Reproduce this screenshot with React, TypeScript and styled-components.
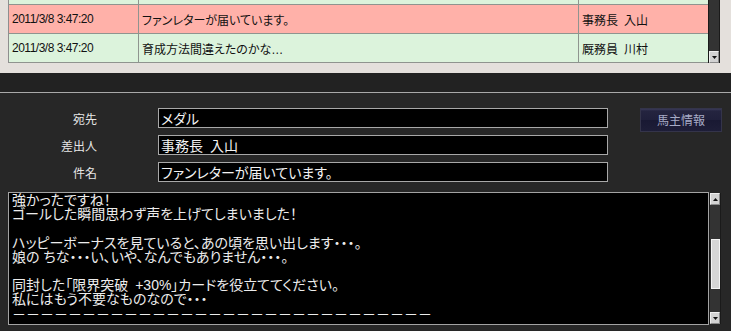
import React from "react";
import styled, { createGlobalStyle } from "styled-components";

const GlobalStyle = createGlobalStyle`
  html, body { margin: 0; padding: 0; background: #ffffff; }
  body { font-family: "Noto Sans CJK JP", sans-serif; }
  #root { width: 737px; }
`;

const JP = `"Liberation Sans", "Noto Sans CJK JP", sans-serif`;

const Screen = styled.div`
  width: 731px;
  height: 331px;
  display: flex;
  flex-direction: column;
  overflow: hidden;
`;

/* ---------- letter list (top) ---------- */
const ListArea = styled.div`
  height: 73px;
  box-sizing: border-box;
  background: #e4e0dc;
  padding-left: 8px;
  display: flex;
  align-items: flex-start;
`;

const ListView = styled.div`
  width: 700px;
  height: 63px;
  box-sizing: border-box;
  border-left: 1px solid #8e8e8e;
  overflow: hidden;
`;

const Rows = styled.div<{ $scroll: number }>`
  display: flex;
  flex-direction: column;
  margin-top: ${(p) => -p.$scroll}px;
`;

const Row = styled.div<{ $tone: "green" | "pink" }>`
  display: grid;
  grid-template-columns: 130px 440px 129px;
  height: 29px;
  box-sizing: border-box;
  border-bottom: 1px solid #8f948f;
  background: ${(p) => (p.$tone === "pink" ? "#ffb1a9" : "#dcf3dc")};
`;

const Cell = styled.div<{ $last?: boolean }>`
  display: flex;
  align-items: center;
  padding-left: 3px;
  border-right: ${(p) => (p.$last ? "none" : "1px solid #8f948f")};
  font-family: ${JP};
  font-size: 12px;
  font-feature-settings: "palt";
  color: #111;
  white-space: pre;
  overflow: hidden;
`;

const DateText = styled.span`
  font-family: "Liberation Sans", sans-serif;
  font-size: 12px;
  letter-spacing: -0.5px;
`;

const VScroll = styled.div<{ $height: number }>`
  width: 12px;
  height: ${(p) => p.$height}px;
  box-sizing: border-box;
  display: flex;
  flex-direction: column;
  background: #333333;
  border-left: 1px solid #1a1a1a;
  border-right: 1px solid #1a1a1a;
`;

const Track = styled.div`
  flex: 1;
  display: flex;
  flex-direction: column;
  align-items: center;
`;

const Thumb = styled.div`
  width: 9px;
  height: 50px;
  box-sizing: border-box;
  background: #d6d6d6;
  border: 1px solid #f4f4f4;
`;

const ScrollButton = styled.div`
  width: 10px;
  height: 12px;
  box-sizing: border-box;
  background: #d2d2d2;
  border: 1px solid #efefef;
  border-right-color: #8a8a8a;
  border-bottom-color: #8a8a8a;
  display: flex;
  align-items: center;
  justify-content: center;
`;

const Arrow = ({ dir }: { dir: "up" | "down" }) => (
  <svg width="5" height="3" viewBox="0 0 5 3">
    <path d={dir === "up" ? "M2.5 0 L5 3 L0 3 Z" : "M0 0 L5 0 L2.5 3 Z"} fill="#111" />
  </svg>
);

/* ---------- dark detail panel ---------- */
const TopBand = styled.div`
  height: 20px;
  box-sizing: border-box;
  background: #222222;
  border-bottom: 1px solid #a9a9a9;
`;

const Panel = styled.div`
  flex: 1;
  background: #272727;
  padding: 15px 0 0 8px;
  display: flex;
  flex-direction: column;
`;

const Header = styled.div`
  display: flex;
  align-items: flex-start;
`;

const Fields = styled.div`
  display: grid;
  grid-template-columns: 89px 450px;
  grid-auto-rows: 20px;
  column-gap: 61px;
  row-gap: 7px;
`;

const Label = styled.div`
  display: flex;
  align-items: center;
  justify-content: flex-end;
  font-family: "Noto Sans CJK JP", sans-serif;
  font-size: 12px;
  color: #e6e6e6;
`;

const Field = styled.div`
  box-sizing: border-box;
  border: 1px solid #a8a8a8;
  background: #000;
  color: #f2f2f2;
  font-family: "Noto Sans CJK JP", sans-serif;
  font-feature-settings: "palt";
  font-size: 14px;
  line-height: 18px;
  padding: 0 2px;
  white-space: pre;
  overflow: hidden;
`;

const OwnerButton = styled.button`
  margin-left: 32px;
  width: 82px;
  height: 24px;
  padding: 0 0 2px;
  box-sizing: border-box;
  border: 1px solid #34344a;
  background: linear-gradient(#3a3a58 0px, #24243f 2px, #20203b 48%, #191933 52%, #1e1e38 100%);
  color: #a7abc6;
  font-family: "Noto Sans CJK JP", sans-serif;
  font-size: 12px;
  cursor: pointer;
`;

const MessageRow = styled.div`
  margin-top: 10px;
  display: flex;
  align-items: flex-start;
`;

const MessageBody = styled.div`
  width: 701px;
  height: 133px;
  box-sizing: border-box;
  border: 1px solid #a3a3a3;
  background: #000;
  color: #ececec;
  font-family: ${JP};
  font-feature-settings: "palt";
  font-size: 14px;
  line-height: 14.2px;
  padding: 0 3px;
  white-space: pre;
  overflow: hidden;
`;

const SideScroll = styled.div`
  margin-top: 1px;
`;

type Letter = { date: string; subject: string; from: string; tone: "green" | "pink" };

const letters: Letter[] = [
  { date: "", subject: "", from: "", tone: "green" },
  { date: "2011/3/8 3:47:20", subject: "ファンレターが届いています。", from: "事務長\u2002入山", tone: "pink" },
  { date: "2011/3/8 3:47:20", subject: "育成方法間違えたのかな…", from: "厩務員\u2002川村", tone: "green" },
];

const body = [
  "強かったですね！",
  "ゴールした瞬間思わず声を上げてしまいました！",
  "",
  "ハッピーボーナスを見ていると、あの頃を思い出します・・・。",
  "娘の ちな・・・い、いや、なんでもありません・・・。",
  "",
  "同封した「限界突破\u2002+30%」カードを役立ててください。",
  "私にはもう不要なものなので・・・",
  "－".repeat(30),
].join("\n");

const thumbRatio = 0.26;

export default function App() {
  return (
    <>
      <GlobalStyle />
      <Screen>
        <ListArea>
          <ListView>
            <Rows $scroll={24}>
              {letters.map((l, i) => (
                <Row key={i} $tone={l.tone}>
                  <Cell>
                    <DateText>{l.date}</DateText>
                  </Cell>
                  <Cell>{l.subject}</Cell>
                  <Cell $last>{l.from}</Cell>
                </Row>
              ))}
            </Rows>
          </ListView>
          <VScroll $height={63}>
            <Track />
            <ScrollButton>
              <Arrow dir="down" />
            </ScrollButton>
          </VScroll>
        </ListArea>
        <TopBand />
        <Panel>
          <Header>
            <Fields>
              <Label>宛先</Label>
              <Field>メダル</Field>
              <Label>差出人</Label>
              <Field>事務長{"\u2002"}入山</Field>
              <Label>件名</Label>
              <Field>ファンレターが届いています。</Field>
            </Fields>
            <OwnerButton>馬主情報</OwnerButton>
          </Header>
          <MessageRow>
            <MessageBody>{body}</MessageBody>
            <SideScroll>
              <VScroll $height={131}>
                <ScrollButton>
                  <Arrow dir="up" />
                </ScrollButton>
                <Track>
                  <Thumb style={{ marginTop: Math.round(thumbRatio * 131) }} />
                </Track>
                <ScrollButton>
                  <Arrow dir="down" />
                </ScrollButton>
              </VScroll>
            </SideScroll>
          </MessageRow>
        </Panel>
      </Screen>
    </>
  );
}
